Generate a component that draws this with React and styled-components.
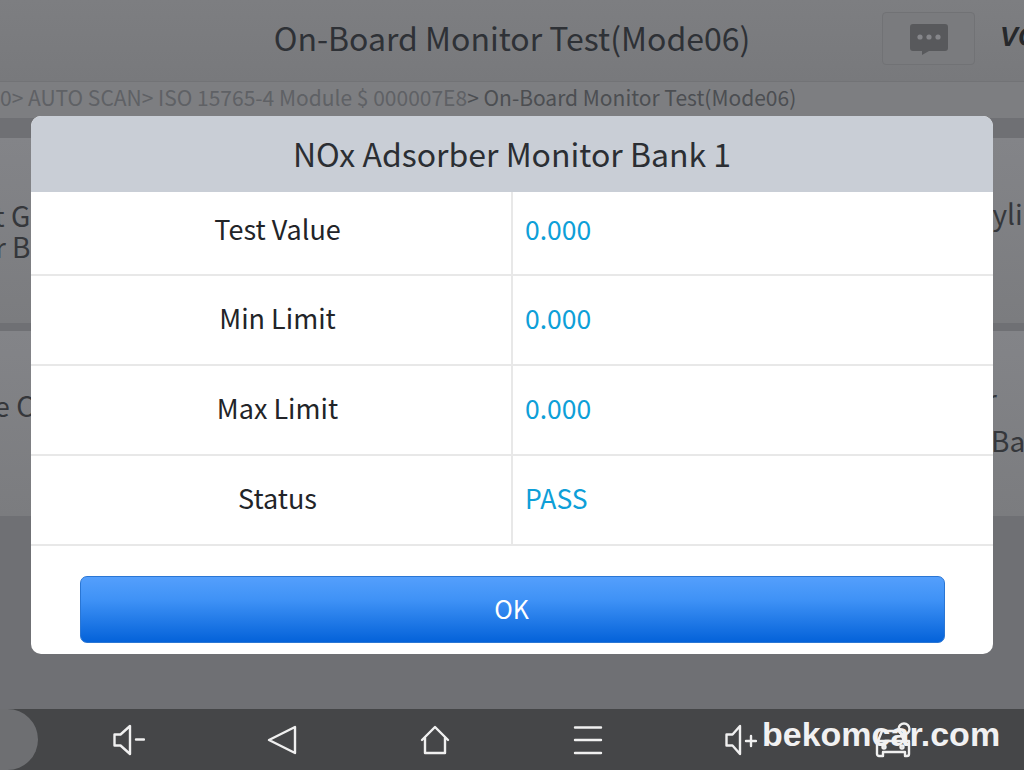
import React from "react";
import styled, { createGlobalStyle } from "styled-components";

const GlobalStyle = createGlobalStyle`
  html, body {
    margin: 0;
    padding: 0;
    background: #6f7074;
  }
  * {
    box-sizing: border-box;
  }
`;

const font = `"Noto Sans CJK SC", "Noto Sans", sans-serif`;

const Screen = styled.div`
  position: relative;
  width: 1024px;
  height: 770px;
  overflow: hidden;
  display: flex;
  flex-direction: column;
  font-family: ${font};
  background: #6f7074;
`;

const Header = styled.div`
  height: 82px;
  display: grid;
  grid-template-columns: 1fr auto 1fr;
  align-items: center;
  background: linear-gradient(#7d7e81, #78797c);
  border-bottom: 1px solid #727376;
`;

const Title = styled.div`
  grid-column: 2;
  font-size: 32px;
  line-height: 40px;
  color: #2e3136;
  padding-bottom: 7px;
`;

const HeaderRight = styled.div`
  display: flex;
  justify-content: flex-end;
  align-items: center;
  height: 100%;
  overflow: hidden;
`;

const ChatButton = styled.div`
  width: 93px;
  height: 53px;
  margin-bottom: 4px;
  display: flex;
  align-items: center;
  justify-content: center;
  border: 1px solid #717275;
  border-radius: 4px;
  background: #7a7b7e;
`;

const Logo = styled.div`
  width: 49px;
  padding-left: 25px;
  padding-bottom: 6px;
  font-family: "Liberation Sans", sans-serif;
  font-size: 27px;
  font-weight: 700;
  font-style: italic;
  white-space: nowrap;
  color: #26282b;
`;

const Breadcrumb = styled.div`
  height: 36px;
  display: flex;
  align-items: center;
  justify-content: flex-start;
  background: #7d7e81;
  font-size: 21px;
  white-space: nowrap;
  padding-bottom: 7px;
`;

const Crumb = styled.span`
  color: ${(props) => props.color};
`;

const CardList = styled.div`
  margin-top: 20px;
  display: flex;
  flex-direction: column;
  gap: 8px;
`;

const CardRow = styled.div`
  height: 185px;
  display: flex;
  justify-content: space-between;
  background: linear-gradient(#838488, #7b7c7f);
`;

const CardText = styled.div`
  display: flex;
  flex-direction: column;
  justify-content: center;
  align-items: ${(props) => (props.$side === "left" ? "flex-end" : "flex-start")};
  width: ${(props) => props.$width}px;
  padding-bottom: ${(props) => props.$lift || 0}px;
  font-size: 28px;
  line-height: ${(props) => props.$leading || 31}px;
  color: #35373b;
  white-space: nowrap;
  overflow: hidden;
`;

const CardLine = styled.span`
  display: block;
  margin-left: ${(props) => props.$shift || 0}px;
`;

const NavBar = styled.div`
  position: absolute;
  left: 0;
  right: 0;
  bottom: 0;
  height: 61px;
  display: grid;
  grid-template-columns: 52px repeat(5, 153px) 154px 53px;
  align-items: center;
  background: #454648;
`;

const HomeKnob = styled.div`
  width: 38px;
  height: 61px;
  border-radius: 0 31px 31px 0;
  background: #6e6f72;
`;

const NavItem = styled.div`
  display: flex;
  align-items: center;
  justify-content: center;
`;

const Watermark = styled.div`
  position: absolute;
  left: 762px;
  top: 714px;
  font-family: "Liberation Sans", sans-serif;
  font-size: 34px;
  line-height: 40px;
  font-weight: 700;
  color: #f1f1f2;
`;

const Overlay = styled.div`
  position: absolute;
  left: 0;
  right: 0;
  top: 0;
  height: 709px;
  padding-top: 116px;
  display: flex;
  justify-content: center;
  align-items: flex-start;
`;

const Dialog = styled.div`
  width: 962px;
  height: 538px;
  border-radius: 10px;
  overflow: hidden;
  background: #ffffff;
  display: flex;
  flex-direction: column;
`;

const DialogTitle = styled.div`
  height: 76px;
  display: flex;
  align-items: center;
  justify-content: center;
  padding-bottom: 2px;
  background: #c9ced6;
  font-size: 32px;
  color: #2b2e33;
`;

const Row = styled.div`
  height: ${(props) => props.$height}px;
  display: grid;
  grid-template-columns: 482px 1fr;
  border-bottom: 2px solid #e8e8e8;
`;

const Label = styled.div`
  display: flex;
  align-items: center;
  justify-content: center;
  padding-left: 13px;
  padding-bottom: ${(props) => props.$lift}px;
  font-size: 27px;
  color: #222428;
  border-right: 2px solid #e8e8e8;
`;

const Value = styled.div`
  display: flex;
  align-items: center;
  padding-left: 12px;
  padding-bottom: ${(props) => props.$lift}px;
  font-size: 26.500px;
  color: #0e9fd8;
`;

const ButtonWrap = styled.div`
  flex: 1;
  display: flex;
  align-items: flex-start;
  justify-content: flex-start;
  padding: 30px 0 0 49px;
`;

const OkButton = styled.button`
  width: 865px;
  height: 67px;
  padding: 0 2px 4px 0;
  border: 1px solid #2a76d4;
  border-radius: 7px;
  background: linear-gradient(#549ffc, #3f92f6 35%, #0462d9);
  color: #ffffff;
  font-family: ${font};
  font-size: 25px;
  cursor: pointer;
`;

const rows = [
  { label: "Test Value", value: "0.000", height: 84, lift: 10 },
  { label: "Min Limit", value: "0.000", height: 90, lift: 6 },
  { label: "Max Limit", value: "0.000", height: 90, lift: 6 },
  { label: "Status", value: "PASS", height: 90, lift: 6 },
];

const ChatIcon = () => (
  <svg width="38" height="32" viewBox="0 0 38 32">
    <path
      d="M3 1h32a3 3 0 0 1 3 3v21a3 3 0 0 1-3 3H19l-7 4v-4H3a3 3 0 0 1-3-3V4a3 3 0 0 1 3-3z"
      fill="#58595c"
    />
    <circle cx="10" cy="14" r="2.600" fill="#85868a" />
    <circle cx="19" cy="14" r="2.600" fill="#85868a" />
    <circle cx="28" cy="14" r="2.600" fill="#85868a" />
  </svg>
);

const NavSvg = ({ width, height, children }) => (
  <svg
    width={width}
    height={height}
    viewBox={`0 0 ${width} ${height}`}
    fill="none"
    stroke="#f0f0f0"
    strokeWidth="2.400"
    strokeLinecap="round"
    strokeLinejoin="round"
  >
    {children}
  </svg>
);

const VolumeDown = () => (
  <NavSvg width={32} height={32}>
    <path d="M1.500 10.500h6L17 2v28l-9.500-8.500h-6z" />
    <path d="M23 15.500h8" />
  </NavSvg>
);

const Back = () => (
  <NavSvg width={30} height={30}>
    <path d="M28 2v26L2 15z" />
  </NavSvg>
);

const Home = () => (
  <NavSvg width={30} height={30}>
    <path d="M2 15L15 2l13 13" />
    <path d="M5 13v15h20V13" />
  </NavSvg>
);

const Menu = () => (
  <NavSvg width={30} height={30}>
    <path d="M2 2.500h26M2 15h26M2 28h26" />
  </NavSvg>
);

const VolumeUp = () => (
  <NavSvg width={32} height={32}>
    <path d="M1.500 10.500h6L15 2v28l-7.500-8.500h-6z" />
    <path d="M21 17h10M26 12v10" />
  </NavSvg>
);

const Car = () => (
  <NavSvg width={38} height={36}>
    <path d="M3 19l4-10h18l4 10" />
    <path d="M2 19h32v13a2 2 0 0 1-2 2h-2v-4H8v4H4a2 2 0 0 1-2-2z" />
    <circle cx="29" cy="7" r="5.500" />
    <circle cx="9" cy="25" r="1.500" />
    <circle cx="27" cy="25" r="1.500" />
  </NavSvg>
);

const App = () => {
  return (
    <Screen>
      <GlobalStyle />
      <Header>
        <Title>On-Board Monitor Test(Mode06)</Title>
        <HeaderRight>
          <ChatButton>
            <ChatIcon />
          </ChatButton>
          <Logo>VCI</Logo>
        </HeaderRight>
      </Header>
      <Breadcrumb>
        <Crumb color="#5f6165">0&gt; AUTO SCAN&gt; ISO 15765-4 Module $ 000007E8</Crumb>
        <Crumb color="#4c4e52">&gt; On-Board Monitor Test(Mode06)</Crumb>
      </Breadcrumb>
      <CardList>
        <CardRow>
          <CardText $side="left" $width={46}>
            <CardLine>Test Ga</CardLine>
            <CardLine>or B1</CardLine>
          </CardText>
          <CardText $side="right" $width={49} $lift={34}>
            <CardLine>Cylinder</CardLine>
          </CardText>
        </CardRow>
        <CardRow>
          <CardText $side="left" $width={34} $lift={36}>
            <CardLine>le C</CardLine>
          </CardText>
          <CardText $side="right" $width={33} $leading={42} $lift={10}>
            <CardLine $shift={-5}>r</CardLine>
            <CardLine>Bank</CardLine>
          </CardText>
        </CardRow>
      </CardList>
      <NavBar>
        <HomeKnob />
        <NavItem>
          <VolumeDown />
        </NavItem>
        <NavItem>
          <Back />
        </NavItem>
        <NavItem>
          <Home />
        </NavItem>
        <NavItem>
          <Menu />
        </NavItem>
        <NavItem>
          <VolumeUp />
        </NavItem>
        <NavItem>
          <Car />
        </NavItem>
      </NavBar>
      <Watermark>bekomcar.com</Watermark>
      <Overlay>
        <Dialog>
          <DialogTitle>NOx Adsorber Monitor Bank 1</DialogTitle>
          {rows.map((row) => (
            <Row key={row.label} $height={row.height}>
              <Label $lift={row.lift}>{row.label}</Label>
              <Value $lift={row.lift}>{row.value}</Value>
            </Row>
          ))}
          <ButtonWrap>
            <OkButton>OK</OkButton>
          </ButtonWrap>
        </Dialog>
      </Overlay>
    </Screen>
  );
};

export default App;
